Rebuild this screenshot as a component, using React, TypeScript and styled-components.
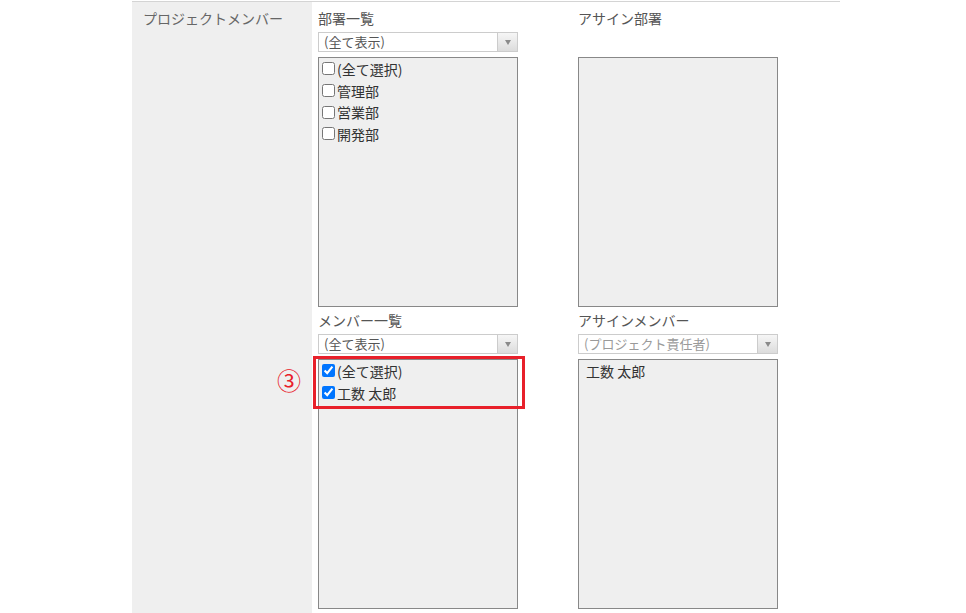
import styled, { createGlobalStyle } from 'styled-components'

const GlobalStyle = createGlobalStyle`
	html, body {
		margin: 0;
		padding: 0;
		background: #fff;
	}
	body {
		font-family: "Noto Sans CJK JP", "Noto Sans", sans-serif;
		font-size: 14px;
		color: #333;
	}
`

type Item = { label: string; checked?: boolean }

const departments: Item[] = [
	{ label: '(全て選択)' },
	{ label: '管理部' },
	{ label: '営業部' },
	{ label: '開発部' },
]

const members: Item[] = [
	{ label: '(全て選択)', checked: true },
	{ label: '工数 太郎', checked: true },
]

export default function App(): JSX.Element {
	return (
		<>
			<GlobalStyle />
			<Page>
				<Row>
					<LabelCell>プロジェクトメンバー</LabelCell>
					<ContentCell>
						<Column>
							<FieldTitle>部署一覧</FieldTitle>
							<Dropdown value="(全て表示)" />
							<ListBox>
								{departments.map((d) => (
									<CheckRow key={d.label}>
										<Check type="checkbox" defaultChecked={d.checked} />
										{d.label}
									</CheckRow>
								))}
							</ListBox>

							<FieldTitle $top={3}>メンバー一覧</FieldTitle>
							<Dropdown value="(全て表示)" />
							<Marked>
								<StepMark>③</StepMark>
								<Highlight />
								<ListBox>
									{members.map((m) => (
										<CheckRow key={m.label}>
											<Check type="checkbox" defaultChecked={m.checked} />
											{m.label}
										</CheckRow>
									))}
								</ListBox>
							</Marked>
						</Column>

						<Column>
							<FieldTitle>アサイン部署</FieldTitle>
							<DropdownSpacer />
							<ListBox />

							<FieldTitle $top={3}>アサインメンバー</FieldTitle>
							<Dropdown value="(プロジェクト責任者)" placeholder />
							<ListBox>
								<PlainRow>工数 太郎</PlainRow>
							</ListBox>
						</Column>
					</ContentCell>
				</Row>
			</Page>
		</>
	)
}

function Dropdown({ value, placeholder }: { value: string; placeholder?: boolean }) {
	return (
		<Select>
			<SelectText $placeholder={placeholder}>{value}</SelectText>
			<SelectArrow>
				<Triangle />
			</SelectArrow>
		</Select>
	)
}

const Page = styled.div`
	padding-left: 132px;
	padding-top: 1px;
`
const Row = styled.div`
	display: flex;
	width: 708px;
	border-top: 1px solid #d4d4d4;
`
const LabelCell = styled.div`
	width: 169px;
	flex-shrink: 0;
	background: #efefef;
	color: #666;
	padding: 6px 0 0 11px;
	line-height: 20px;
	min-height: 605px;
`
const ContentCell = styled.div`
	display: flex;
	gap: 60px;
	padding: 0 0 3px 6px;
`
const Column = styled.div`
	display: flex;
	flex-direction: column;
	width: 200px;
`
const FieldTitle = styled.div<{ $top?: number }>`
	margin-top: ${(p) => (p.$top ?? 6)}px;
	line-height: 20px;
	color: #555;
`
const Select = styled.div`
	display: flex;
	margin-top: 4px;
	height: 20px;
	box-sizing: border-box;
	border: 1px solid #ccc;
	background: #fff;
	width: 200px;
`
const SelectText = styled.div<{ $placeholder?: boolean }>`
	flex: 1;
	padding-left: 5px;
	font-size: 13px;
	line-height: 18px;
	color: ${(p) => (p.$placeholder ? '#9a9a9a' : '#555')};
`
const SelectArrow = styled.div`
	width: 19px;
	border-left: 1px solid #ccc;
	background: linear-gradient(#f6f6f6, #dcdcdc);
	display: flex;
	align-items: center;
	justify-content: center;
`
const Triangle = styled.span`
	width: 0;
	height: 0;
	border-left: 3px solid transparent;
	border-right: 3px solid transparent;
	border-top: 5px solid #8a8a8a;
	margin-top: 1px;
`
const DropdownSpacer = styled.div`
	height: 24px;
`
const ListBox = styled.div`
	margin-top: 5px;
	width: 200px;
	height: 250px;
	box-sizing: border-box;
	border: 1px solid #888;
	background: #efefef;
`
const CheckRow = styled.label`
	display: flex;
	align-items: center;
	height: 21.7px;
	color: #333;
`
const Check = styled.input`
	width: 13px;
	height: 13px;
	margin: 0 2px 0 3px;
	accent-color: #0075ff;
`
const PlainRow = styled.div`
	padding-left: 7px;
	line-height: 22px;
	color: #333;
`
const Marked = styled.div`
	position: relative;
`
const Highlight = styled.div`
	position: absolute;
	left: -5px;
	top: 2px;
	width: 212px;
	height: 53px;
	box-sizing: border-box;
	border: 3px solid #e8202a;
	pointer-events: none;
	z-index: 1;
`
const StepMark = styled.span`
	position: absolute;
	left: -41px;
	top: 13px;
	font-size: 24px;
	line-height: 26px;
	color: #e8202a;
`
